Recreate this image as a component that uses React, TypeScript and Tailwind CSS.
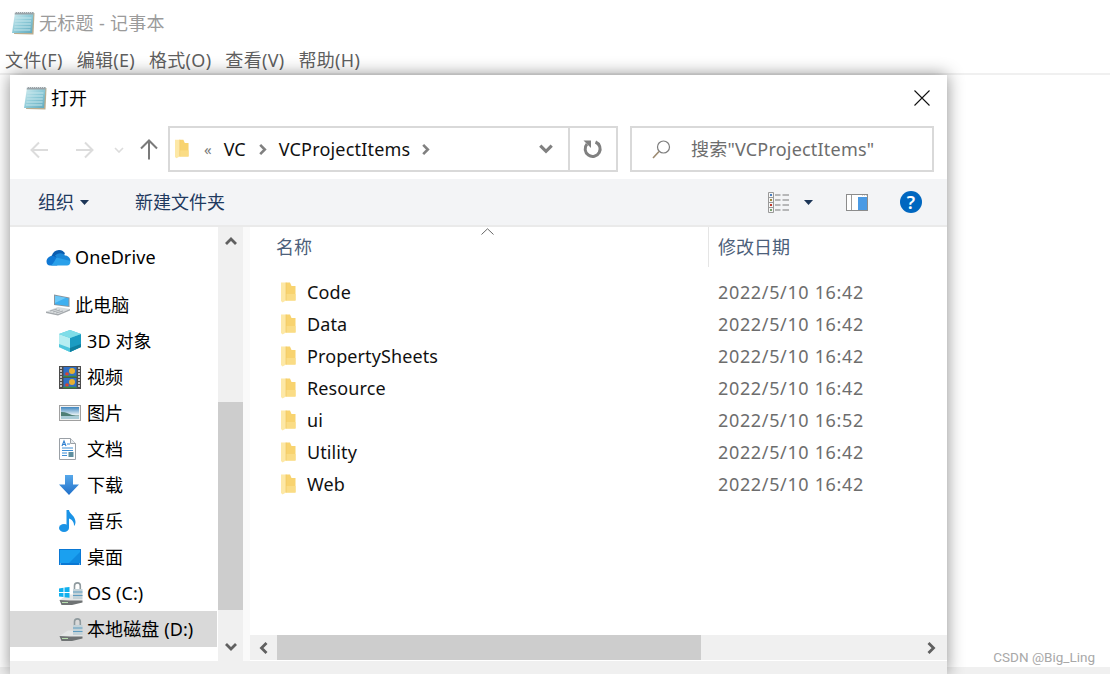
const menus = ["文件(F)", "编辑(E)", "格式(O)", "查看(V)", "帮助(H)"];

const files = [
  { name: "Code", date: "2022/5/10 16:42" },
  { name: "Data", date: "2022/5/10 16:42" },
  { name: "PropertySheets", date: "2022/5/10 16:42" },
  { name: "Resource", date: "2022/5/10 16:42" },
  { name: "ui", date: "2022/5/10 16:52" },
  { name: "Utility", date: "2022/5/10 16:42" },
  { name: "Web", date: "2022/5/10 16:42" },
];

function NotepadIcon() {
  return (
    <svg width="24" height="24" viewBox="0 0 24 24" className="shrink-0">
      <defs>
        <linearGradient id="np" x1="0" y1="0" x2="1" y2="1">
          <stop offset="0" stopColor="#d8eff2" />
          <stop offset="0.5" stopColor="#8fcbd8" />
          <stop offset="1" stopColor="#5fa8bd" />
        </linearGradient>
      </defs>
      <path d="M5 2H23.5L22.5 23.5L3 23Z" fill="#b9ad8f" />
      <path d="M4 1.5H22.5L21 22H1Z" fill="url(#np)" />
      <path d="M4 1H22.5V3.5H3.7Z" fill="#9aa3a8" />
      <path d="M4 1.2h1M6 1.2h1M8 1.2h1M10 1.2h1M12 1.2h1M14 1.2h1M16 1.2h1M18 1.2h1M20 1.2h1" stroke="#eef2f3" strokeWidth="1" />
      <path d="M4.5 7H20.5M4 10H20M3.7 13H19.8M3.4 16H19.6M3 19H19.3" stroke="#c6e6ec" strokeWidth="1" />
    </svg>
  );
}

function FolderIcon({ width = 15, height = 21 }: { width?: number; height?: number }) {
  return (
    <svg width={width} height={height} viewBox="0 0 15 21" className="shrink-0">
      <path d="M5 0.5H9L10.5 4H14.5V18.5H5Z" fill="#f8d36f" />
      <path d="M5 12H14.5V18.5H5Z" fill="#fadc85" />
      <path d="M0 0.5H5V18.5L1.5 20.5L0 19Z" fill="#fde8a6" />
      <path d="M5 0.5V18.5" stroke="#eec45a" strokeWidth="0.6" />
    </svg>
  );
}

function Caret() {
  return (
    <svg width="9" height="5" viewBox="0 0 9 5" className="shrink-0">
      <path d="M0 0H9L4.5 5Z" fill="#1c3557" />
    </svg>
  );
}

function Chevron({ dir, color = "#808080", size = 14 }: { dir: "up" | "down" | "left" | "right"; color?: string; size?: number }) {
  const d = {
    up: "M2 10L7 5L12 10",
    down: "M2 4L7 9L12 4",
    left: "M9.5 2L4.5 7L9.5 12",
    right: "M4.5 2L9.5 7L4.5 12",
  }[dir];
  return (
    <svg width={size} height={size} viewBox="0 0 14 14" className="shrink-0">
      <path d={d} fill="none" stroke={color} strokeWidth="2.8" />
    </svg>
  );
}

function NavArrow({ flip, color, height = 20 }: { flip?: boolean; color: string; height?: number }) {
  return (
    <svg width="20" height={height} viewBox="0 0 20 20" className={flip ? "shrink-0 rotate-180" : "shrink-0"}>
      <path d="M19 10H2.5M10 2.5L2.5 10L10 17.5" fill="none" stroke={color} strokeWidth="2" />
    </svg>
  );
}

function OneDriveIcon() {
  return (
    <svg width="25" height="17" viewBox="0 0 25 17">
      <path d="M5 9C6 4 9 1 13 1C16 1 18 2.5 19 5L10 11Z" fill="#0a5db0" />
      <path d="M9 6.5C13 3 17 4 19 6.5C22 6.5 24.5 9 24.5 12L14 13Z" fill="#1a87d8" />
      <path d="M6 7C8 7 9 7.5 10.5 8.5L16 12L11 16.5H4C2 16.5 0.5 15 0.5 12.5C0.5 9.5 3 7 6 7Z" fill="#0f78d4" />
      <path d="M10.5 8.5L24.5 12C24.5 15 23 16.5 21 16.5H5C8 14 9 11 10.5 8.5Z" fill="#2aa0ea" />
    </svg>
  );
}

function PcIcon() {
  return (
    <svg width="24" height="22" viewBox="0 0 24 22">
      <path d="M8 0.5L23.5 3.5V13L8 11Z" fill="#8a949c" />
      <path d="M9 1.8L22.5 4.3V12L9 10.2Z" fill="#3fb0f0" />
      <path d="M9 1.8L20 3.8L9 9Z" fill="#6cc8f7" />
      <path d="M0 17.5L12 13L24 15L12 20Z" fill="#d8dcde" />
      <path d="M0 17.5V19L12 21.5L24 16.5V15L12 20Z" fill="#a4a9ad" />
      <path d="M4 17L11 15M7 18L14 16M10 19L17 17" stroke="#9ba0a4" strokeWidth="0.8" />
    </svg>
  );
}

function BoxIcon() {
  return (
    <svg width="22" height="22" viewBox="0 0 22 22">
      <path d="M11 0L22 4V17L11 22L0 17V4Z" fill="#4fc6dc" />
      <path d="M0 4L11 8V22L0 17Z" fill="#b6eef2" />
      <path d="M11 8L22 4V17L11 22Z" fill="#1b9cc2" />
      <path d="M11 0L22 4L11 8L0 4Z" fill="#7fdde8" />
      <path d="M0 14L11 18V22L0 17Z" fill="#4fc6dc" />
      <path d="M11 18L22 14V17L11 22Z" fill="#0f7f9f" />
    </svg>
  );
}

function VideoIcon() {
  return (
    <svg width="22" height="23" viewBox="0 0 22 23">
      <rect width="22" height="23" fill="#4b4b4b" />
      <path d="M1 2h2M1 5h2M1 8h2M1 11h2M1 14h2M1 17h2M1 20h2M19 2h2M19 5h2M19 8h2M19 11h2M19 14h2M19 17h2M19 20h2" stroke="#e8e8e8" strokeWidth="1.4" />
      <rect x="4.5" y="1" width="13" height="10" fill="#2f6fc6" />
      <rect x="4.5" y="12" width="13" height="10" fill="#2f6fc6" />
      <circle cx="13" cy="5" r="3" fill="#e8b030" />
      <circle cx="8" cy="8" r="1.8" fill="#d8452e" />
      <circle cx="13" cy="16" r="3" fill="#e8b030" />
      <circle cx="8" cy="19" r="1.8" fill="#d8452e" />
      <path d="M4.5 10.5H17.5M4.5 21.5H17.5" stroke="#3c8a3a" strokeWidth="1.4" />
    </svg>
  );
}

function PictureIcon() {
  return (
    <svg width="22" height="16" viewBox="0 0 22 16">
      <defs>
        <linearGradient id="sky" x1="0" y1="0" x2="0" y2="1">
          <stop offset="0" stopColor="#3f86c0" />
          <stop offset="0.65" stopColor="#e4eff3" />
        </linearGradient>
      </defs>
      <rect x="0.5" y="0.5" width="21" height="15" fill="#f2f2f2" stroke="#a0a0a0" />
      <rect x="2" y="2" width="18" height="12" fill="url(#sky)" />
      <path d="M2 7C6 6.5 9 8.5 13 10C16 10.5 18 10.5 20 10.5V14H2Z" fill="#4f7f76" />
      <path d="M2 11H20V14H2Z" fill="#a9cbd6" />
    </svg>
  );
}

function DocIcon() {
  return (
    <svg width="17" height="22" viewBox="0 0 17 22">
      <path d="M0.5 0.5H11.5L16.5 5.5V21.5H0.5Z" fill="#fff" stroke="#9aa0a6" />
      <path d="M11.5 0.5V5.5H16.5" fill="#e8ecef" stroke="#9aa0a6" />
      <path d="M3 8L5 3L7 8M4 6.5H6" fill="none" stroke="#2f80d0" strokeWidth="1.1" />
      <path d="M8 6H11M3 10H14M3 12.5H14M3 15H8M3 17.5H8" stroke="#3f8fd6" strokeWidth="1" />
      <rect x="9.5" y="14" width="5" height="5" fill="#5f8f9f" />
    </svg>
  );
}

function DownloadIcon() {
  return (
    <svg width="20" height="20" viewBox="0 0 20 20">
      <defs>
        <linearGradient id="dl" x1="0" y1="0" x2="0" y2="1">
          <stop offset="0" stopColor="#57a8ea" />
          <stop offset="1" stopColor="#1f6fc9" />
        </linearGradient>
      </defs>
      <path d="M6 0H14V9.5H20L10 20L0 9.5H6Z" fill="url(#dl)" />
    </svg>
  );
}

function MusicIcon() {
  return (
    <svg width="17" height="22" viewBox="0 0 17 22">
      <ellipse cx="5" cy="18" rx="5" ry="4" fill="#1b93e6" />
      <path d="M7.5 0H10C10.5 4 16.5 6 16.5 12C16.5 13.5 16 15 15 16C15.3 12 13 9.5 10 8.5V18H7.5Z" fill="#1b93e6" />
    </svg>
  );
}

function DesktopIcon() {
  return (
    <svg width="22" height="16" viewBox="0 0 22 16">
      <rect width="22" height="16" fill="#0a78d4" />
      <rect x="1" y="1" width="20" height="13" fill="#1aa0f0" />
      <path d="M10 14L21 3V14Z" fill="#0f8ae0" />
      <path d="M1 15H21" stroke="#bfe3fa" strokeWidth="1" strokeDasharray="1 18" />
    </svg>
  );
}

function DriveIcon({ windows }: { windows?: boolean }) {
  return (
    <svg width="24" height="23" viewBox="0 0 24 23">
      <path d="M15.5 8V3.8A2.9 2.9 0 0 1 21.3 3.8V8" fill="none" stroke="#8f9a9e" strokeWidth="1.6" />
      <rect x="14" y="7" width="9.5" height="10" fill="#c3d2d8" />
      <path d="M14 10H23.5M14 13.5H23.5" stroke="#5f9cc0" strokeWidth="1.2" />
      <path d="M0.5 18L9 12.5H14V17H23.5V18.5L11 20Z" fill="#e4e6e6" />
      <path d="M0.5 18L11 18.5H23.5V20.5L13 23H2.5Z" fill="#6f7374" />
      <path d="M3 20.5H9" stroke="#b8e0b0" strokeWidth="1" />
      {windows && (
        <path d="M0 6.5L4.5 5.8V10H0ZM5.5 5.6L10.5 5V10H5.5ZM0 11H4.5V15L0 14.4ZM5.5 11H10.5V15.8L5.5 15.2Z" fill="#10b0ee" />
      )}
    </svg>
  );
}

function ViewIcon() {
  return (
    <svg width="21" height="21" viewBox="0 0 21 21">
      <path d="M0.5 0.5H5.5V20.5H0.5ZM0.5 5.5H5.5M0.5 10.5H5.5M0.5 15.5H5.5" fill="#f5f5f5" stroke="#999" />
      <rect x="2" y="2" width="2" height="2" fill="#4a7fc0" />
      <rect x="2" y="7" width="2" height="2" fill="#a08a40" />
      <rect x="2" y="12" width="2" height="2" fill="#c0392b" />
      <rect x="2" y="17" width="2" height="2" fill="#7aa070" />
      <path d="M7 3H12.5M14.5 3H21M7 8H12.5M14.5 8H21M7 13H12.5M14.5 13H21M7 18H12.5M14.5 18H21" stroke="#7a7a7a" strokeWidth="1" />
    </svg>
  );
}

function PaneIcon() {
  return (
    <svg width="22" height="17" viewBox="0 0 22 17">
      <rect x="0.5" y="0.5" width="21" height="16" fill="#fff" stroke="#8c8c8c" />
      <path d="M5.5 1V16" stroke="#9a9a9a" />
      <rect x="12" y="3" width="9" height="13" fill="#4a9ae4" />
      <path d="M16 1.5h1M18 1.5h1M20 1.5h1" stroke="#d5d5d5" />
    </svg>
  );
}

function SidebarRow({ icon, label, selected, top }: { icon: React.ReactNode; label: string; selected?: boolean; top?: boolean }) {
  return (
    <div className={`flex h-9 items-center ${top ? "pl-[36px]" : "pl-[49px]"} ${selected ? "bg-[#d9d9d9]" : ""}`}>
      <div className={`flex ${top ? "w-[29px]" : "w-[28px]"} shrink-0 justify-start`}>{icon}</div>
      <span className="text-[18px] tracking-[0.1px] whitespace-nowrap text-black">{label}</span>
    </div>
  );
}

export default function App() {
  return (
    <div className="relative flex h-[674px] w-[1110px] flex-col overflow-hidden bg-white font-['Noto_Sans','Noto_Sans_CJK_SC',sans-serif]">
      {/* notepad behind the dialog */}
      <div className="flex h-[44px] items-center gap-[4px] pt-[2px] pl-[11px]">
        <NotepadIcon />
        <span className="text-[18px] tracking-[0.3px] text-[#9b9b9b]">无标题 - 记事本</span>
      </div>
      <div className="flex h-[29px] items-center gap-[14px] pt-[4px] pl-[5px]">
        {menus.map((m) => (
          <span key={m} className="text-[18px] tracking-[0.3px] whitespace-nowrap text-[#5f5f5f]">
            {m}
          </span>
        ))}
      </div>
      <div className="h-[2px] bg-[#f0f0f0]" />

      <div className="absolute right-0 bottom-0 left-0 h-[7px] bg-[#f0f0f0]" />
      <span className="absolute right-[15px] bottom-[9px] font-['Roboto',sans-serif] text-[13.5px] leading-[16px] text-[#a8a8a8]">
        CSDN @Big_Ling
      </span>

      {/* open dialog */}
      <div className="relative z-10 ml-[10px] flex h-[599px] w-[937px] flex-col bg-white shadow-[0_0_16px_rgba(0,0,0,0.45)]">
        <div className="flex h-[46px] items-center pr-[17px] pl-[13px]">
          <NotepadIcon />
          <span className="ml-[4px] text-[18px] text-black">打开</span>
          <svg width="16" height="16" viewBox="0 0 16 16" className="ml-auto">
            <path d="M0.5 0.5L15.5 15.5M15.5 0.5L0.5 15.5" stroke="#111" strokeWidth="1.1" />
          </svg>
        </div>

        {/* nav and address bar */}
        <div className="flex h-[58px] items-start pt-[5px] pr-[13px]">
          <div className="flex h-[46px] w-[158px] shrink-0 items-center pt-[1px] pl-[19px]">
            <NavArrow color="#dcdcdc" />
            <div className="w-[26px]" />
            <NavArrow flip color="#dcdcdc" />
            <div className="flex w-[47px] justify-center">
              <svg width="10" height="6" viewBox="0 0 10 6">
                <path d="M1 1L5 5L9 1" fill="none" stroke="#dcdcdc" strokeWidth="1.6" />
              </svg>
            </div>
            <svg width="18" height="21" viewBox="0 0 18 21" className="-ml-[2px]">
              <path d="M9 20.5V2M1 9.5L9 1.5L17 9.5" fill="none" stroke="#7a7a7a" strokeWidth="2" />
            </svg>
          </div>
          <div className="flex h-[46px] w-[450px] shrink-0 items-center border-2 border-[#d9d9d9]">
            <div className="flex min-w-0 flex-1 items-center pl-[5px]">
              <FolderIcon width={14} height={20} />
              <span className="ml-[15px] text-[15px] leading-none text-[#7a7a7a]">«</span>
              <span className="ml-[12px] text-[18px] text-[#111]">VC</span>
              <div className="ml-[10px]">
                <Chevron dir="right" size={13} />
              </div>
              <span className="ml-[10px] text-[18px] tracking-[0.2px] text-[#111]">VCProjectItems</span>
              <div className="ml-[9px]">
                <Chevron dir="right" size={13} />
              </div>
              <div className="mr-[14px] ml-auto">
                <Chevron dir="down" size={16} />
              </div>
            </div>
            <div className="flex h-full w-[48px] shrink-0 items-center justify-center border-l-2 border-[#d9d9d9]">
              <svg width="20" height="20" viewBox="0 0 20 20">
                <path d="M12.5 3A7.5 7.5 0 1 1 4 5" fill="none" stroke="#808080" strokeWidth="3" />
                <path d="M0.5 1.5H8V9Z" fill="#808080" />
              </svg>
            </div>
          </div>
          <div className="ml-[12px] flex h-[46px] flex-1 items-center border-2 border-[#d9d9d9] pl-[20px]">
            <svg width="19" height="19" viewBox="0 0 19 19" className="shrink-0">
              <circle cx="11.5" cy="7" r="6" fill="none" stroke="#7d7d7d" strokeWidth="1.2" />
              <path d="M7 11.5L1 18" stroke="#9c8a70" strokeWidth="1.6" />
            </svg>
            <span className="ml-[20px] text-[18px] tracking-[0.2px] whitespace-nowrap text-[#6d6d6d]">搜索"VCProjectItems"</span>
          </div>
        </div>

        {/* toolbar */}
        <div className="flex h-[48px] items-center border-b-2 border-[#eaeaea] bg-[#f3f4f6] pr-[25px] pl-[28px]">
          <span className="text-[18px] text-[#1f3a5f]">组织</span>
          <div className="ml-[6px]">
            <Caret />
          </div>
          <span className="ml-[46px] text-[18px] text-[#1f3a5f]">新建文件夹</span>
          <div className="ml-auto flex items-center">
            <ViewIcon />
            <div className="ml-[15px]">
              <Caret />
            </div>
            <div className="ml-[33px]">
              <PaneIcon />
            </div>
            <div className="ml-[32px] flex h-[22px] w-[22px] items-center justify-center rounded-full bg-[#0067c0]">
              <span className="text-[18px] leading-none font-semibold text-white">?</span>
            </div>
          </div>
        </div>

        <div className="flex h-[434px]">
          {/* nav pane */}
          <div className="flex w-[207px] shrink-0 flex-col pt-[12px]">
            <SidebarRow top icon={<OneDriveIcon />} label="OneDrive" />
            <div className="h-[12px]" />
            <SidebarRow top icon={<PcIcon />} label="此电脑" />
            <SidebarRow icon={<BoxIcon />} label="3D 对象" />
            <SidebarRow icon={<VideoIcon />} label="视频" />
            <SidebarRow icon={<PictureIcon />} label="图片" />
            <SidebarRow icon={<DocIcon />} label="文档" />
            <SidebarRow icon={<DownloadIcon />} label="下载" />
            <SidebarRow icon={<MusicIcon />} label="音乐" />
            <SidebarRow icon={<DesktopIcon />} label="桌面" />
            <SidebarRow icon={<DriveIcon windows />} label="OS (C:)" />
            <SidebarRow selected icon={<DriveIcon />} label="本地磁盘 (D:)" />
          </div>
          <div className="ml-[1px] flex w-[25px] shrink-0 flex-col items-center bg-[#f0f0f0]">
            <div className="flex h-[28px] w-full items-center justify-center">
              <Chevron dir="up" color="#606060" />
            </div>
            <div className="h-[147px]" />
            <div className="h-[208px] w-full bg-[#cdcdcd]" />
            <div className="h-[23px]" />
            <div className="flex h-[28px] w-full items-center justify-center">
              <Chevron dir="down" color="#606060" />
            </div>
          </div>
          <div className="w-[7px] shrink-0 bg-[#fafafa]" />

          {/* file list */}
          <div className="relative flex min-w-0 flex-1 flex-col">
            <svg width="13" height="7" viewBox="0 0 13 7" className="absolute top-[1px] left-[231px]">
              <path d="M0.5 6.5L6.5 0.8L12.5 6.5" fill="none" stroke="#666" />
            </svg>
            <div className="flex h-[40px] shrink-0 items-center">
              <span className="w-[458px] pl-[26px] text-[18px] text-[#4c607a]">名称</span>
              <span className="flex h-full items-center border-l border-[#e5e5e5] pl-[9px] text-[18px] text-[#4c607a]">修改日期</span>
            </div>
            <div className="flex flex-1 flex-col pt-[9px]">
              {files.map((f) => (
                <div key={f.name} className="flex h-8 items-center">
                  <div className="flex w-[57px] shrink-0 pl-[31px]">
                    <FolderIcon />
                  </div>
                  <span className="w-[411px] shrink-0 text-[18px] tracking-[0.1px] text-[#111]">{f.name}</span>
                  <span className="text-[18px] tracking-[0.65px] whitespace-nowrap text-[#6d6d6d]">{f.date}</span>
                </div>
              ))}
            </div>
            <div className="mb-[1px] flex h-[25px] shrink-0 items-center bg-[#f0f0f0]">
              <div className="flex w-[27px] shrink-0 justify-center">
                <Chevron dir="left" color="#606060" />
              </div>
              <div className="h-full w-[424px] bg-[#cdcdcd]" />
              <div className="mr-[9px] ml-auto">
                <Chevron dir="right" color="#606060" />
              </div>
            </div>
          </div>
        </div>
        <div className="h-[13px] bg-[#f0f0f0]" />
      </div>
    </div>
  );
}
